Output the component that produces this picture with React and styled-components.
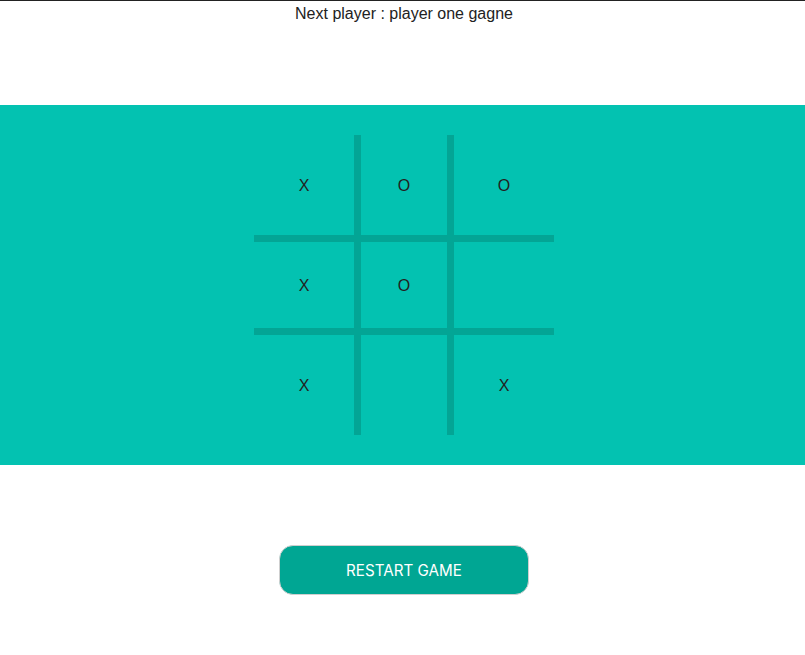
import React, { useState } from "react";
import styled, { createGlobalStyle } from "styled-components";

const GlobalStyle = createGlobalStyle`
  body {
    margin: 0;
    font-family: "Liberation Sans", Arial, sans-serif;
    background: #fff;
    color: #222;
  }
`;

const Page = styled.div`
  border-top: 1px solid #222;
  padding-left: 3px;
`;

const Status = styled.div`
  text-align: center;
  font-size: 16px;
  line-height: 24px;
  height: 104px;
  padding-top: 1px;
  box-sizing: border-box;
`;

const Band = styled.div`
  background: #03c2b1;
  height: 360px;
  display: flex;
  justify-content: center;
  align-items: center;
  margin-left: -3px;
  padding-left: 3px;
`;

const Board = styled.div`
  display: grid;
  grid-template-columns: repeat(3, 100px);
  grid-template-rows: repeat(3, 100px);
`;

const Cell = styled.div`
  box-sizing: border-box;
  display: flex;
  align-items: center;
  justify-content: center;
  padding-top: 2px;
  font-size: 16px;
  color: #222;
  border-color: #03a595;
  border-style: solid;
  border-width: ${(p) => (p.$midRow ? "7px" : "0")} ${(p) => (p.$midCol ? "7px" : "0")};
`;

const Footer = styled.div`
  display: flex;
  justify-content: center;
  padding-top: 80px;
`;

const RestartButton = styled.button`
  width: 250px;
  height: 50px;
  border: 1px solid #cfcfcf;
  border-radius: 14px;
  background: #00a693;
  color: #fff;
  font-family: Inter, "Liberation Sans", sans-serif;
  font-size: 15.2px;
  cursor: pointer;
`;

const initial = ["X", "O", "O", "X", "O", "", "X", "", "X"];

export default function App() {
  const [squares, setSquares] = useState(initial);
  return (
    <Page>
      <GlobalStyle />
      <Status>Next player : player one gagne</Status>
      <Band>
        <Board>
          {squares.map((v, i) => (
            <Cell key={i} $midCol={i % 3 === 1} $midRow={Math.floor(i / 3) === 1}>
              {v}
            </Cell>
          ))}
        </Board>
      </Band>
      <Footer>
        <RestartButton onClick={() => setSquares(Array(9).fill(""))}>
          RESTART GAME
        </RestartButton>
      </Footer>
    </Page>
  );
}
